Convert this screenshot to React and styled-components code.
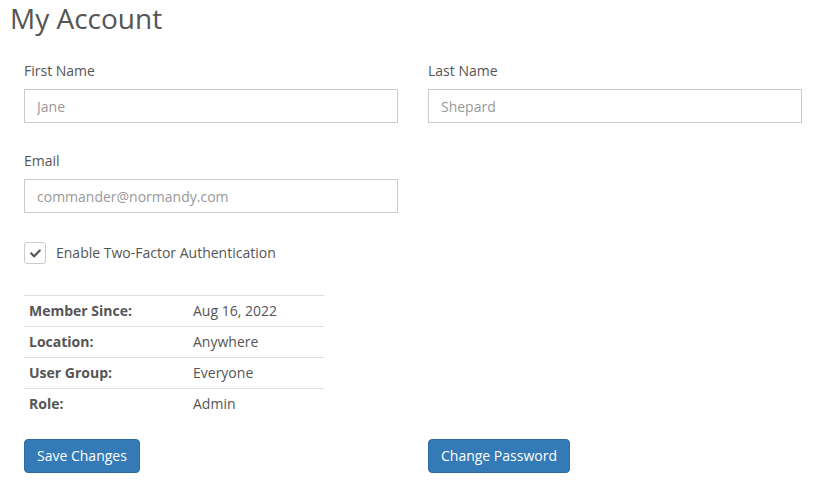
import React from "react";
import styled, { createGlobalStyle } from "styled-components";
import { FaCheck } from "react-icons/fa";

const GlobalStyle = createGlobalStyle`
  * { box-sizing: border-box; }
  body {
    margin: 0;
    background: #fff;
    font-family: "Open Sans", "Liberation Sans", sans-serif;
    font-size: 14px;
    color: #555;
  }
`;

const info = [
  ["Member Since:", "Aug 16, 2022"],
  ["Location:", "Anywhere"],
  ["User Group:", "Everyone"],
  ["Role:", "Admin"],
];

const App = () => {
  return (
    <Page>
      <GlobalStyle />
      <Title>My Account</Title>
      <Form>
        <Row>
          <Group>
            <Label>First Name</Label>
            <Input placeholder="Jane" />
          </Group>
          <Group>
            <Label>Last Name</Label>
            <Input placeholder="Shepard" />
          </Group>
        </Row>
        <Row>
          <Group>
            <Label>Email</Label>
            <Input placeholder="commander@normandy.com" />
          </Group>
        </Row>
        <CheckRow>
          <Box>
            <FaCheck size={11} color="#555" />
          </Box>
          <span>Enable Two-Factor Authentication</span>
        </CheckRow>
        <Table>
          <tbody>
            {info.map(([k, v]) => (
              <tr key={k}>
                <Key>{k}</Key>
                <Val>{v}</Val>
              </tr>
            ))}
          </tbody>
        </Table>
        <Row>
          <div>
            <Button>Save Changes</Button>
          </div>
          <div>
            <Button>Change Password</Button>
          </div>
        </Row>
      </Form>
    </Page>
  );
};

export default App;

const Page = styled.div`
  padding: 0 10px;
`;

const Title = styled.h1`
  margin: 0;
  font-size: 28px;
  font-weight: 400;
  line-height: 36px;
  color: #555;
`;

const Form = styled.div`
  padding: 25px 14px 0 14px;
`;

const Row = styled.div`
  display: grid;
  grid-template-columns: 374px 374px;
  column-gap: 30px;
  margin-bottom: 28px;
`;

const Group = styled.div`
  display: flex;
  flex-direction: column;
`;

const Label = styled.label`
  line-height: 20px;
  margin-bottom: 8px;
  color: #555;
`;

const Input = styled.input`
  height: 34px;
  border: 1px solid #ccc;
  border-radius: 0;
  padding: 6px 12px;
  font-family: inherit;
  font-size: 14px;
  color: #555;
  outline: none;

  &::placeholder {
    color: #999;
  }
`;

const CheckRow = styled.div`
  display: flex;
  align-items: center;
  gap: 10px;
  margin-top: 29px;
  line-height: 20px;
`;

const Box = styled.div`
  width: 22px;
  height: 22px;
  border: 1px solid #ccc;
  border-radius: 3px;
  display: flex;
  align-items: center;
  justify-content: center;
`;

const Table = styled.table`
  width: 300px;
  border-collapse: collapse;
  margin-top: 31px;
  margin-bottom: 20px;
`;

const Key = styled.td`
  width: 163px;
  padding: 5px 6px 5px 5px;
  border-top: 1px solid #ddd;
  font-weight: 700;
  line-height: 20px;
  color: #555;
`;

const Val = styled.td`
  padding: 5px 6px;
  border-top: 1px solid #ddd;
  line-height: 20px;
  color: #555;
`;

const Button = styled.button`
  height: 34px;
  padding: 6px 12px;
  background: #337ab7;
  border: 1px solid #2e6da4;
  border-radius: 4px;
  color: #fff;
  font-family: inherit;
  font-size: 14px;
  line-height: 20px;
  cursor: pointer;
`;
